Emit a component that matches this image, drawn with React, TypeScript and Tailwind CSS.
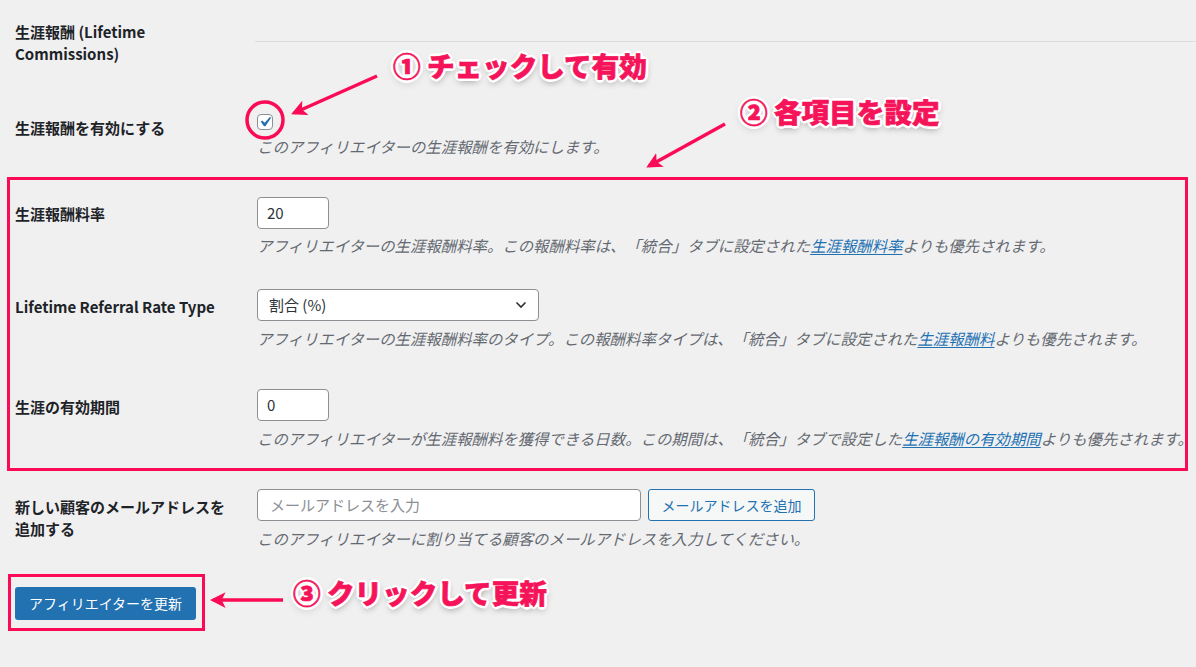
import React from "react";

const RED = "#fb0a55";

function Checkbox() {
  return (
    <div className="w-[16px] h-[16px] rounded-[4px] border border-[#8c8f94] bg-white flex items-center justify-center overflow-visible">
      <svg width="20" height="20" viewBox="0 0 20 20" className="shrink-0">
        <path d="M14.83 4.89l1.34.94-5.81 8.38H9.02L5.78 9.67l1.34-1.25 2.57 2.4z" fill="#2271b1" />
      </svg>
    </div>
  );
}

function Label({ children, pt }: { children: React.ReactNode; pt: string }) {
  return (
    <div className={`w-[242px] shrink-0 font-bold leading-[22px] ${pt}`}>
      <div className="max-w-[216px]">{children}</div>
    </div>
  );
}

function Desc({ children, mt = "mt-[6px]" }: { children: React.ReactNode; mt?: string }) {
  return (
    <p className={`${mt} leading-[22px] italic text-[15.4px] text-[#646970] whitespace-nowrap [text-spacing-trim:space-all]`}>
      {children}
    </p>
  );
}

function Link({ children }: { children: React.ReactNode }) {
  return <span className="text-[#2271b1] underline underline-offset-2">{children}</span>;
}

const annot =
  "absolute whitespace-nowrap text-[27.6px] font-black leading-none text-[#f5145a] [-webkit-text-stroke:0.7px_#f5145a] [text-spacing-trim:space-all] [text-shadow:3px_0_0_#fff,-3px_0_0_#fff,0_3px_0_#fff,0_-3px_0_#fff,2px_2px_0_#fff,-2px_-2px_0_#fff,2px_-2px_0_#fff,-2px_2px_0_#fff,0_3px_7px_rgba(0,0,0,0.45)]";

export default function App() {
  return (
    <div className="relative w-[1196px] h-[667px] overflow-hidden bg-[#f0f0f1] text-[#1d2327] font-['Noto_Sans_CJK_JP',sans-serif] text-[15px]">
      <div className="pl-[15px]">
        {/* Section title */}
        <div className="flex">
          <Label pt="pt-[21px]">生涯報酬 (Lifetime Commissions)</Label>
          <div className="flex-1 mt-[41px] -ml-[2px] border-t border-[#dcdcde]" />
        </div>

        {/* Enable */}
        <div className="flex mt-[49px]">
          <Label pt="pt-[3px]">生涯報酬を有効にする</Label>
          <div>
            <Checkbox />
            <Desc mt="mt-[5px]">このアフィリエイターの生涯報酬を有効にします。</Desc>
          </div>
        </div>

        {/* Highlighted box */}
        <div className="mt-[20px] -ml-[8px] w-[1181px] border-[3px] border-[#fb0a55] pl-[5px] pt-[17px] pb-[19px]">
          <div className="flex">
            <Label pt="pt-[6px]">生涯報酬料率</Label>
            <div>
              <div className="w-[72px] h-[32px] rounded-[4px] border border-[#8c8f94] bg-white pl-[9px] flex items-center text-[#2c3338]">20</div>
              <Desc mt="mt-[5px]">
                アフィリエイターの生涯報酬料率。この報酬料率は、「統合」タブに設定された<Link>生涯報酬料率</Link>よりも優先されます。
              </Desc>
            </div>
          </div>

          <div className="flex mt-[33px]">
            <Label pt="pt-[7px]">Lifetime Referral Rate Type</Label>
            <div>
              <div className="w-[282px] h-[32px] rounded-[4px] border border-[#8c8f94] bg-white pl-[11px] pr-[11px] flex items-center justify-between text-[#2c3338]">
                <span>割合 (%)</span>
                <svg width="12" height="8" viewBox="0 0 12 8">
                  <path d="M1.5 1.5 L6 6 L10.5 1.5" fill="none" stroke="#2c3338" strokeWidth="1.6" />
                </svg>
              </div>
              <Desc>
                アフィリエイターの生涯報酬料率のタイプ。この報酬料率タイプは、「統合」タブに設定された<Link>生涯報酬料</Link>よりも優先されます。
              </Desc>
            </div>
          </div>

          <div className="flex mt-[40px]">
            <Label pt="pt-[7px]">生涯の有効期間</Label>
            <div>
              <div className="w-[72px] h-[32px] rounded-[4px] border border-[#8c8f94] bg-white pl-[9px] flex items-center text-[#2c3338]">0</div>
              <Desc>
                このアフィリエイターが生涯報酬料を獲得できる日数。この期間は、「統合」タブで設定した<Link>生涯報酬の有効期間</Link>よりも優先されます。
              </Desc>
            </div>
          </div>
        </div>

        {/* Email */}
        <div className="flex mt-[18px]">
          <Label pt="pt-[7px]">新しい顧客のメールアドレスを追加する</Label>
          <div>
            <div className="flex gap-[7px]">
              <div className="w-[384px] h-[32px] rounded-[4px] border border-[#8c8f94] bg-white pl-[12px] flex items-center text-[#8c8f94]">メールアドレスを入力</div>
              <div className="w-[167px] h-[32px] rounded-[3px] border border-[#2271b1] bg-[#f6f7f7] flex items-center justify-center text-[14px] text-[#2271b1]">メールアドレスを追加</div>
            </div>
            <Desc>このアフィリエイターに割り当てる顧客のメールアドレスを入力してください。</Desc>
          </div>
        </div>

        {/* Submit */}
        <div className="mt-[25px] -ml-[7px] w-[197px] border-[3px] border-[#fb0a55] pt-[10px] pb-[8px] pl-[4px]">
          <div className="w-[181px] h-[33px] rounded-[3px] bg-[#2271b1] flex items-center justify-center text-[14px] text-white">アフィリエイターを更新</div>
        </div>
      </div>

      {/* Annotations */}
      <div className={`${annot} left-[393px] top-[52px]`}>① チェックして有効</div>
      <div className={`${annot} left-[740px] top-[98px]`}>② 各項目を設定</div>
      <div className={`${annot} left-[293px] top-[579px]`}>③ クリックして更新</div>

      <svg className="absolute inset-0 pointer-events-none" width="1196" height="667" viewBox="0 0 1196 667">
        <defs>
          <marker id="ah" viewBox="0 0 10 10" refX="8" refY="5" markerWidth="4.5" markerHeight="4.5" orient="auto">
            <path d="M0,0 L10,5 L0,10 L2.5,5 z" fill={RED} />
          </marker>
        </defs>
        <circle cx="265" cy="120" r="18" fill="none" stroke={RED} strokeWidth="3.5" />
        <line x1="377" y1="76" x2="294" y2="113" stroke={RED} strokeWidth="3.5" markerEnd="url(#ah)" />
        <line x1="725" y1="124" x2="649" y2="166" stroke={RED} strokeWidth="3.5" markerEnd="url(#ah)" />
        <line x1="283" y1="600" x2="213" y2="600" stroke={RED} strokeWidth="3.5" markerEnd="url(#ah)" />
      </svg>
    </div>
  );
}
